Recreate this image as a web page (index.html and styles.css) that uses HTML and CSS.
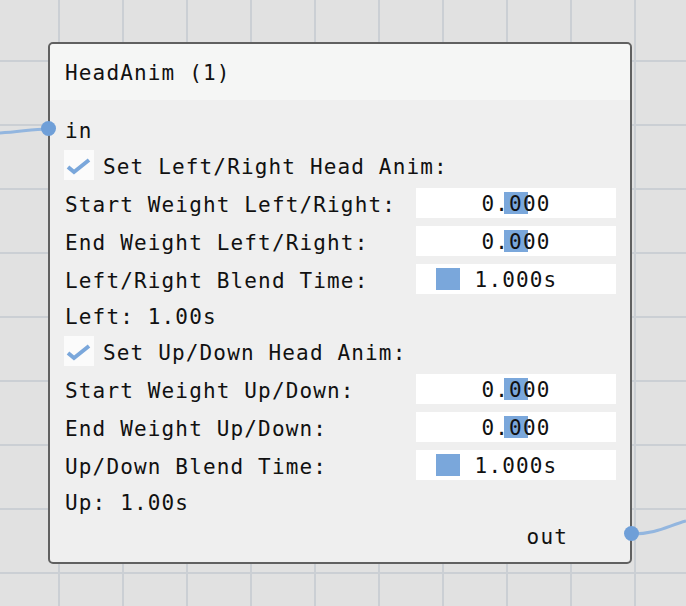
FILE: index.html
```html
<!DOCTYPE html>
<html>
<head>
<meta charset="utf-8">
<link rel="stylesheet" href="styles.css">
</head>
<body>
<div class="canvas">
  <svg class="wires" width="686" height="606" viewBox="0 0 686 606">
    <path d="M0 133 C 20 132, 32 129, 48 129" />
    <path d="M632 534 C 656 534, 668 526, 686 521" />
  </svg>
  <div class="node">
    <div class="title">HeadAnim (1)</div>
    <div class="body">
      <div class="row text port-in"><span class="dot dot-in"></span><span class="lbl">in</span></div>
      <div class="row check"><span class="cb"><svg width="30" height="30" viewBox="0 0 30 30"><polyline points="4,17 10,22 25,10" /></svg></span><span class="lbl">Set Left/Right Head Anim:</span></div>
      <div class="row field-row"><span class="lbl">Start Weight Left/Right:</span><div class="field"><span class="hl"></span><span class="val">0.000</span></div></div>
      <div class="row field-row"><span class="lbl">End Weight Left/Right:</span><div class="field"><span class="hl"></span><span class="val">0.000</span></div></div>
      <div class="row field-row"><span class="lbl">Left/Right Blend Time:</span><div class="field"><span class="sq"></span><span class="val">1.000s</span></div></div>
      <div class="row text"><span class="lbl">Left: 1.00s</span></div>
      <div class="row check"><span class="cb"><svg width="30" height="30" viewBox="0 0 30 30"><polyline points="4,17 10,22 25,10" /></svg></span><span class="lbl">Set Up/Down Head Anim:</span></div>
      <div class="row field-row"><span class="lbl">Start Weight Up/Down:</span><div class="field"><span class="hl"></span><span class="val">0.000</span></div></div>
      <div class="row field-row"><span class="lbl">End Weight Up/Down:</span><div class="field"><span class="hl"></span><span class="val">0.000</span></div></div>
      <div class="row field-row"><span class="lbl">Up/Down Blend Time:</span><div class="field"><span class="sq"></span><span class="val">1.000s</span></div></div>
      <div class="row text"><span class="lbl">Up: 1.00s</span></div>
      <div class="row text port-out"><span class="lbl">out</span><span class="dot dot-out"></span></div>
    </div>
  </div>
</div>
</body>
</html>
```
FILE: styles.css
```css
html, body {
  margin: 0;
  padding: 0;
}
body {
  width: 686px;
  height: 606px;
  overflow: hidden;
  background-color: #e1e1e1;
  background-image:
    linear-gradient(to right, #cbcfd4 0, #cbcfd4 2px, transparent 2px),
    linear-gradient(to bottom, #cbcfd4 0, #cbcfd4 2px, transparent 2px);
  background-size: 64px 64px;
  background-position: 58px 60px;
  font-family: "DejaVu Sans Mono", "Liberation Mono", monospace;
  font-size: 21px;
  letter-spacing: 1.15px;
  color: #111;
}
.canvas {
  position: relative;
  width: 686px;
  height: 606px;
}
.wires {
  position: absolute;
  left: 0;
  top: 0;
}
.wires path {
  fill: none;
  stroke: #93b6df;
  stroke-width: 3;
}
.node {
  position: absolute;
  left: 48px;
  top: 42px;
  width: 580px;
  border: 2px solid #606060;
  border-radius: 5px;
  background: #efefef;
}
.title {
  height: 56px;
  display: flex;
  align-items: center;
  padding-left: 15px;
  padding-top: 1px;
  box-sizing: border-box;
  background: #f5f6f5;
  border-radius: 4px 4px 0 0;
}
.body {
  display: flex;
  flex-direction: column;
  gap: 8px;
  padding: 16px 14px 14px 14px;
}
.row {
  display: flex;
  align-items: center;
  position: relative;
}
.lbl {
  position: relative;
  top: 2px;
}
.row.text {
  height: 26px;
  padding-left: 1px;
}
.row.check {
  height: 30px;
  gap: 9px;
}
.row.field-row {
  height: 30px;
  justify-content: space-between;
  padding-left: 1px;
}
.port-out {
  justify-content: flex-end;
  padding-right: 48px;
}
.dot {
  position: absolute;
  width: 15px;
  height: 15px;
  border-radius: 50%;
  background: #6f9fd8;
}
.dot-in {
  left: -23px;
  top: 5px;
}
.dot-out {
  right: -23px;
  top: 4px;
}
.cb {
  width: 30px;
  height: 30px;
  background: #fbfbfb;
  display: block;
}
.cb svg {
  display: block;
}
.cb polyline {
  fill: none;
  stroke: #7aa7db;
  stroke-width: 4;
}
.field {
  position: relative;
  width: 200px;
  height: 30px;
  background: #fff;
  display: flex;
  align-items: center;
  justify-content: center;
}
.val {
  position: relative;
  z-index: 1;
  top: 1px;
}
.hl {
  position: absolute;
  left: 88px;
  top: 4px;
  width: 24px;
  height: 22px;
  background: #7aa7db;
}
.sq {
  position: absolute;
  left: 20px;
  top: 4px;
  width: 24px;
  height: 22px;
  background: #7aa7db;
}
```
